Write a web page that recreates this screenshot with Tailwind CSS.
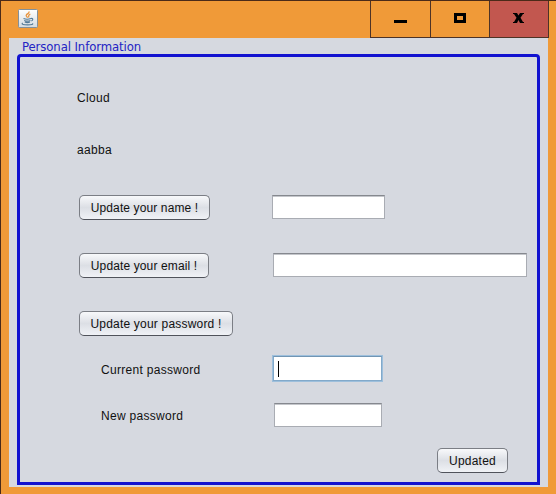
<!DOCTYPE html>
<html lang="en">
<head>
<meta charset="utf-8">
<title>Personal Information</title>
<script src="https://cdn.jsdelivr.net/npm/@tailwindcss/browser@4"></script>
</head>
<body class="w-[556px] h-[494px] overflow-hidden bg-[#f09a38] border-t border-l border-[#4b2a18] flex flex-col font-['Liberation_Sans',Arial,sans-serif] text-[12px] leading-[16px] tracking-[0.3px] text-[#111]">
  <header class="flex h-[37px] shrink-0 justify-between pl-[17px] pr-[6px]">
    <svg class="mt-[8px] h-[19px] w-[20px]" viewBox="0 0 20 19" fill="none">
      <defs><linearGradient id="tile" x1="0" y1="0" x2="0" y2="1"><stop stop-color="#fff"/><stop offset="1" stop-color="#d3dbe1"/></linearGradient></defs>
      <rect x=".5" y=".5" width="19" height="18" rx="1" fill="url(#tile)" stroke="#83909a"/>
      <path d="M10.7 2.5c1.5 2-3.600 2.700-2.300 4.500.4.700 1 1.100 1.200 1.700M12.300 5.200c-2.700 1-1.500 2-1.600 3.200" stroke="#e8953f" stroke-width="1.300"/>
      <path d="M5.500 9.500c2 .8 5.500.7 7.500 0M6.200 11.500c2 .8 4.500.7 6.300 0M6.800 13.100c1.600.6 3.600.6 5.200 0M13 9.500c2.300-.5 2.300 1.600.4 2.400M4.700 14c-2 1.300 1.300 1.900 5 1.900s6-.7 4.700-1.500" stroke="#547b98" stroke-width="1.100"/>
    </svg>
    <div class="flex h-[37px]">
      <div class="flex w-[60px] border-l border-b border-[#4e3326] pl-[23px] pt-[19px]"><span class="h-[3px] w-[13px] bg-black"></span></div>
      <div class="flex w-[59px] border-l border-b border-[#4e3326] pl-[23px] pt-[12px]"><span class="h-[10px] w-[12px] border-3 border-black"></span></div>
      <div class="flex w-[60px] border-x border-b border-[#4e3326] bg-[#c2574f] pl-[23px] pt-[12px]">
        <svg class="h-[10px] w-[11px]" viewBox="0 0 11 10"><path d="M0 0h4l1.500 2.500L7 0h4v1h-1L7.500 4.800 10 9h1v1H7L5.500 7 4 10H0V9h1l2.500-4.200L1 1H0z" fill="#000"/></svg>
      </div>
      <div class="w-px"></div>
    </div>
  </header>

  <main class="ml-[8px] h-[449px] w-[539px] shrink-0 bg-[#d6d9e0] px-[8px] pb-[2px]">
    <h1 class="h-[16px] pl-[5px] font-['DejaVu_Sans_Condensed','DejaVu_Sans',sans-serif] text-[13px] leading-[17px] tracking-[-0.1px] whitespace-nowrap text-[#2424c4]">Personal Information</h1>
    <section class="flex h-[431px] w-[523px] flex-col rounded-t-[4px] border-3 border-[#1212d0]">
      <p class="mt-[33px] ml-[57px] h-[16px]">Cloud</p>
      <p class="mt-[36px] ml-[57px] h-[16px]">aabba</p>

      <div class="mt-[37px] flex h-[25px] pl-[59px]">
        <button class="h-[25px] w-[131px] rounded-[5px] border border-[#7b7e85] border-b-[#50535b] bg-linear-to-b from-[#f8f9fb] via-[#dcdfe5] to-[#f0f2f6] tracking-[0.12px] whitespace-nowrap">Update your name !</button>
        <input class="ml-[62px] h-[24px] w-[113px] border border-[#a9acb3] border-t-[#85888e] bg-white shadow-[inset_0_1px_0_#c4c6cb]" aria-label="Name">
      </div>
      <div class="mt-[33px] flex h-[25px] pl-[59px]">
        <button class="h-[25px] w-[130px] rounded-[5px] border border-[#7b7e85] border-b-[#50535b] bg-linear-to-b from-[#f8f9fb] via-[#dcdfe5] to-[#f0f2f6] tracking-[0.12px] whitespace-nowrap">Update your email !</button>
        <input class="ml-[64px] h-[24px] w-[254px] border border-[#a9acb3] border-t-[#85888e] bg-white shadow-[inset_0_1px_0_#c4c6cb]" aria-label="Email">
      </div>
      <div class="mt-[33px] flex h-[25px] pl-[59px]">
        <button class="h-[25px] w-[154px] rounded-[5px] border border-[#7b7e85] border-b-[#50535b] bg-linear-to-b from-[#f8f9fb] via-[#dcdfe5] to-[#f0f2f6] tracking-[0.2px] whitespace-nowrap">Update your password !</button>
      </div>
      <div class="mt-[19px] flex h-[27px] pl-[81px]">
        <label class="w-[171px] pt-[7px]">Current password</label>
        <div class="flex h-[27px] w-[111px] border-2 border-[#82a9ca] border-t-[#7195b3] bg-white pt-[4px] pl-[4px] outline -outline-offset-1 outline-[#9dbfdc]"><span class="h-[16px] w-px bg-black"></span></div>
      </div>
      <div class="mt-[21px] flex h-[24px] pl-[81px]">
        <label class="w-[173px] pt-[5px]">New password</label>
        <input class="h-[24px] w-[108px] border border-[#a9acb3] border-t-[#85888e] bg-white shadow-[inset_0_1px_0_#c4c6cb]" aria-label="New password">
      </div>
      <div class="mt-[21px] flex justify-end pr-[29px]">
        <button class="h-[25px] w-[71px] rounded-[5px] border border-[#7b7e85] border-b-[#50535b] bg-linear-to-b from-[#f8f9fb] via-[#dcdfe5] to-[#f0f2f6] tracking-[0.23px]">Updated</button>
      </div>
    </section>
  </main>
</body>
</html>
